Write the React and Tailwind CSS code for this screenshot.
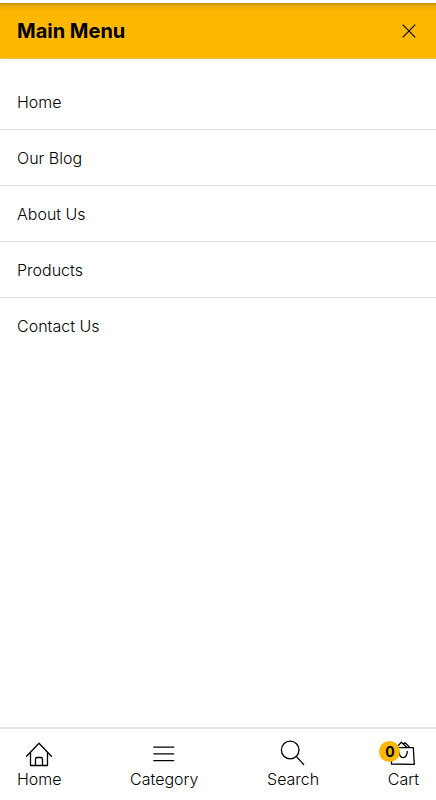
const MENU_ITEMS = ['Home', 'Our Blog', 'About Us', 'Products', 'Contact Us']

const ICON = 'w-7 h-7 fill-none stroke-black'

function CloseIcon() {
  return (
    <svg viewBox="0 0 14 14" className="w-3.5 h-3.5 fill-none stroke-black" aria-hidden="true">
      <path d="M0.7 0.7 13.3 13.3M13.3 0.7 0.7 13.3" strokeWidth="1.1" />
    </svg>
  )
}

function HomeIcon() {
  return (
    <svg viewBox="0 0 28 28" className={ICON} strokeWidth="1.3" strokeLinecap="round" strokeLinejoin="round" aria-hidden="true">
      <path d="M1.6 16.2 14 3.2 26.4 16.2" />
      <path d="M5.5 13V25.5H22.5V13" />
      <path d="M10.5 25.3V19Q10.5 17.5 12 17.5H16Q17.5 17.5 17.5 19V25.3" />
    </svg>
  )
}

function CategoryIcon() {
  return (
    <svg viewBox="0 0 28 28" className={ICON} strokeWidth="1.3" aria-hidden="true">
      <path d="M3.3 7.2H24.2M3.3 13.8H24.2M3.3 20.6H24.2" />
    </svg>
  )
}

function SearchIcon() {
  return (
    <svg viewBox="0 0 28 28" className={ICON} strokeWidth="1.3" aria-hidden="true">
      <circle cx="11.2" cy="10" r="8.8" />
      <path d="M17.2 16.4 25 24.8" />
    </svg>
  )
}

function CartIcon() {
  return (
    <svg viewBox="0 0 28 28" className={ICON} strokeWidth="1.3" strokeLinejoin="round" aria-hidden="true">
      <path d="M3.3 7.6H24.3L25.3 24.4L2.4 24L3.3 7.6Z" />
      <path d="M7.5 7.4 12.4 2.2 18 7.4M14.6 4 16 2.8 20.8 7.4" />
      <path d="M10 11.5C10.2 15.6 11.8 17.8 14 17.6C16.4 17.4 18.2 15 18.3 11" />
    </svg>
  )
}

const TABS = [
  { label: 'Home', Icon: HomeIcon },
  { label: 'Category', Icon: CategoryIcon },
  { label: 'Search', Icon: SearchIcon },
  { label: 'Cart', Icon: CartIcon, count: 0 },
]

export default function App() {
  return (
    <div className="min-h-screen flex flex-col bg-white text-black font-['Inter',sans-serif] pt-[3px]">
      <header className="flex items-center justify-between h-14 pl-[17px] pr-5 bg-[#fcb800] border-b border-[#efc04a] shadow-[inset_0_7px_5px_-5px_rgba(90,70,20,0.4)]">
        <h1 className="text-xl font-bold">Main Menu</h1>
        <button type="button" aria-label="Close menu">
          <CloseIcon />
        </button>
      </header>

      <nav aria-label="Main" className="flex-1 pt-[15px]">
        <ul className="divide-y divide-[#e1e1e1]">
          {MENU_ITEMS.map(item => (
            <li key={item}>
              <a href="#" className="flex items-center h-[55px] px-[17px] text-base font-light">{item}</a>
            </li>
          ))}
        </ul>
      </nav>

      <nav aria-label="Shortcuts" className="flex justify-between px-[17px] pt-[11px] pb-2.5 border-t-2 border-[#e4e4e4]">
        {TABS.map(({ label, Icon, count }) => (
          <a key={label} href="#" className="flex flex-col items-center text-base leading-[22px] font-light">
            <span className="relative">
              <Icon />
              {count !== undefined && (
                <span className="absolute -left-2.5 top-px flex items-center justify-center w-[21px] h-[21px] rounded-full bg-[#fcb800] text-sm font-bold">
                  {count}
                </span>
              )}
            </span>
            {label}
          </a>
        ))}
      </nav>
    </div>
  )
}
